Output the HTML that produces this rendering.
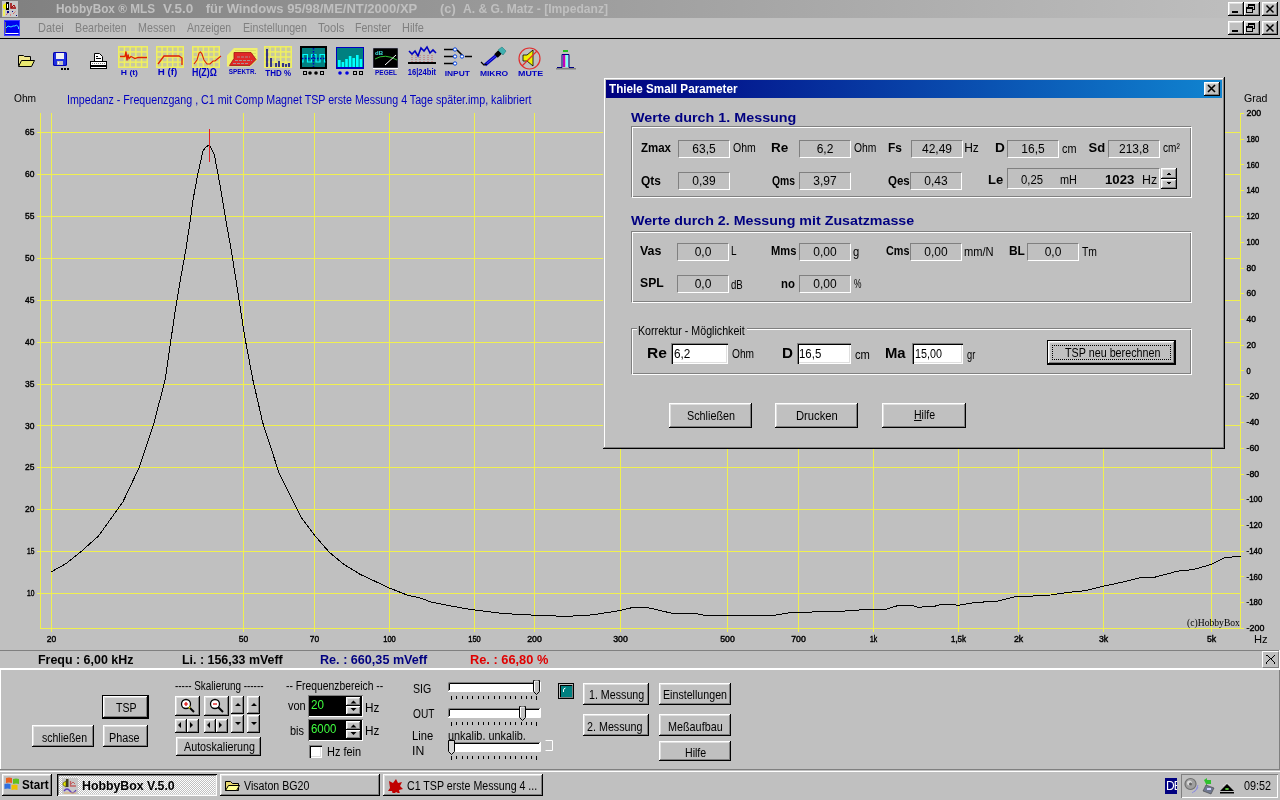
<!DOCTYPE html>
<html><head><meta charset="utf-8">
<style>
*{box-sizing:border-box;margin:0;padding:0}
html{will-change:transform}html,body{width:1280px;height:800px;overflow:hidden;background:#c0c0c0;font-family:"Liberation Sans",sans-serif;font-size:12px;color:#000;position:relative}
.a{position:absolute;white-space:nowrap}
.btn{position:absolute;background:#c0c0c0;box-shadow:inset -1px -1px #000,inset 1px 1px #fff,inset -2px -2px #808080,inset 2px 2px #dfdfdf;text-align:center;white-space:nowrap}
.sunk{position:absolute;background:#c0c0c0;border-top:1px solid #808080;border-left:1px solid #808080;border-right:1px solid #fff;border-bottom:1px solid #fff;text-align:center;white-space:nowrap}
.edit{position:absolute;background:#fff;box-shadow:inset 1px 1px #808080,inset 2px 2px #000,inset -1px -1px #fff,inset -2px -2px #dfdfdf;white-space:nowrap}
.grp{position:absolute;border-top:1px solid #808080;border-left:1px solid #808080;border-right:1px solid #fff;border-bottom:1px solid #fff;box-shadow:inset 1px 1px #fff,inset -1px -1px #808080}
.b{font-weight:bold}
.wb{position:absolute;width:16px;height:14px;background:#c0c0c0;box-shadow:inset -1px -1px #000,inset 1px 1px #fff,inset -2px -2px #808080,inset 2px 2px #dfdfdf}
</style></head><body>

<!-- title bar -->
<div class="a" style="left:0;top:0;width:1280px;height:18px;background:linear-gradient(to right,#808080,#c0c0c0)"></div>
<svg class="a" style="left:2px;top:1px" width="16" height="16">
<rect width="16" height="16" fill="#c8c8c8"/>
<path d="M1,4 l3,-2 v7 l-3,-2z" fill="#f0f000"/><rect x="4" y="1" width="3" height="8" fill="#000"/><rect x="5" y="3" width="1" height="4" fill="#fff"/>
<path d="M9,2 v5 h5" fill="none" stroke="#a00000" stroke-width="1.5"/><path d="M10,6 l2,-2 l1,2" fill="none" stroke="#a00000"/>
<rect x="1" y="9" width="2" height="6" fill="#f0f060"/>
<path d="M4,14 l3,-3 M8,14 l2,0 M11,13 l3,-3" stroke="#e04040" stroke-dasharray="1,1"/>
<rect x="5" y="10" width="2" height="2" fill="#000080"/><rect x="10" y="10" width="1" height="1" fill="#000080"/><rect x="14" y="14" width="1" height="1" fill="#000080"/>
</svg>
<div class="wb" style="left:1228px;top:2px"></div>
<div class="wb" style="left:1244px;top:2px"></div>
<div class="wb" style="left:1262px;top:2px"></div>
<div class="wb" style="left:1228px;top:21px"></div>
<div class="wb" style="left:1244px;top:21px"></div>
<div class="wb" style="left:1262px;top:21px"></div>

<svg class="a" style="left:1228px;top:2px" width="50" height="34">
<g>
<rect x="4" y="9" width="6" height="2" fill="#000"/>
<rect x="20.5" y="2.5" width="6" height="5" fill="none" stroke="#000"/><rect x="20" y="2" width="7" height="2" fill="#000"/>
<rect x="18.5" y="5.5" width="6" height="5" fill="#c0c0c0" stroke="#000"/><rect x="18" y="5" width="7" height="2" fill="#000"/>
<path d="M38.5,3.5 l7,7 M45.5,3.5 l-7,7" stroke="#000" stroke-width="1.5"/>
</g>
<g transform="translate(0,19)">
<rect x="4" y="9" width="6" height="2" fill="#000"/>
<rect x="20.5" y="2.5" width="6" height="5" fill="none" stroke="#000"/><rect x="20" y="2" width="7" height="2" fill="#000"/>
<rect x="18.5" y="5.5" width="6" height="5" fill="#c0c0c0" stroke="#000"/><rect x="18" y="5" width="7" height="2" fill="#000"/>
<path d="M38.5,3.5 l7,7 M45.5,3.5 l-7,7" stroke="#000" stroke-width="1.5"/>
</g>
</svg>
<!-- menu bar -->
<svg class="a" style="left:4px;top:20px" width="16" height="16">
<rect x="0" y="0" width="16" height="16" fill="#0000f0"/><rect x="0.5" y="0.5" width="15" height="15" fill="none" stroke="#4040ff" stroke-width="1"/>
<path d="M1.5,2 V13.5 H14.5" fill="none" stroke="#fff" stroke-width="1"/><path d="M1.5,2 V13" fill="none" stroke="#000" stroke-width="0.6"/>
<path d="M2,8 l2,-2 l3,1 l2,-1 l2,0 l1.5,-1 l2,2 v2" fill="none" stroke="#40e0ff" stroke-width="1"/>
</svg>
<div class="a" style="left:0;top:38px;width:1280px;height:1px;background:#000"></div>

<!-- chart labels -->

<svg class="a" style="left:0;top:0" width="1280" height="800"><line x1="37" y1="593.5" x2="1240" y2="593.5" stroke="#f0f050"/><line x1="37" y1="551.5" x2="1240" y2="551.5" stroke="#f0f050"/><line x1="37" y1="509.5" x2="1240" y2="509.5" stroke="#f0f050"/><line x1="37" y1="467.5" x2="1240" y2="467.5" stroke="#f0f050"/><line x1="37" y1="425.5" x2="1240" y2="425.5" stroke="#f0f050"/><line x1="37" y1="384.5" x2="1240" y2="384.5" stroke="#f0f050"/><line x1="37" y1="342.5" x2="1240" y2="342.5" stroke="#f0f050"/><line x1="37" y1="300.5" x2="1240" y2="300.5" stroke="#f0f050"/><line x1="37" y1="258.5" x2="1240" y2="258.5" stroke="#f0f050"/><line x1="37" y1="216.5" x2="1240" y2="216.5" stroke="#f0f050"/><line x1="37" y1="174.5" x2="1240" y2="174.5" stroke="#f0f050"/><line x1="37" y1="132.5" x2="1240" y2="132.5" stroke="#f0f050"/><line x1="51.5" y1="113" x2="51.5" y2="632" stroke="#f0f050"/><line x1="243.5" y1="113" x2="243.5" y2="632" stroke="#f0f050"/><line x1="314.5" y1="113" x2="314.5" y2="632" stroke="#f0f050"/><line x1="389.5" y1="113" x2="389.5" y2="632" stroke="#f0f050"/><line x1="474.5" y1="113" x2="474.5" y2="632" stroke="#f0f050"/><line x1="534.5" y1="113" x2="534.5" y2="632" stroke="#f0f050"/><line x1="620.5" y1="113" x2="620.5" y2="632" stroke="#f0f050"/><line x1="727.5" y1="113" x2="727.5" y2="632" stroke="#f0f050"/><line x1="798.5" y1="113" x2="798.5" y2="632" stroke="#f0f050"/><line x1="873.5" y1="113" x2="873.5" y2="632" stroke="#f0f050"/><line x1="958.5" y1="113" x2="958.5" y2="632" stroke="#f0f050"/><line x1="1018.5" y1="113" x2="1018.5" y2="632" stroke="#f0f050"/><line x1="1103.5" y1="113" x2="1103.5" y2="632" stroke="#f0f050"/><line x1="1211.5" y1="113" x2="1211.5" y2="632" stroke="#f0f050"/><line x1="40.5" y1="113" x2="40.5" y2="629" stroke="#f0f050"/><line x1="40" y1="628.5" x2="1244" y2="628.5" stroke="#f0f050"/><line x1="1240.5" y1="113" x2="1240.5" y2="629" stroke="#f0f050"/><line x1="1240" y1="113.5" x2="1244" y2="113.5" stroke="#f0f050"/><line x1="1240" y1="139.5" x2="1244" y2="139.5" stroke="#f0f050"/><line x1="1240" y1="164.5" x2="1244" y2="164.5" stroke="#f0f050"/><line x1="1240" y1="190.5" x2="1244" y2="190.5" stroke="#f0f050"/><line x1="1240" y1="216.5" x2="1244" y2="216.5" stroke="#f0f050"/><line x1="1240" y1="242.5" x2="1244" y2="242.5" stroke="#f0f050"/><line x1="1240" y1="268.5" x2="1244" y2="268.5" stroke="#f0f050"/><line x1="1240" y1="293.5" x2="1244" y2="293.5" stroke="#f0f050"/><line x1="1240" y1="319.5" x2="1244" y2="319.5" stroke="#f0f050"/><line x1="1240" y1="345.5" x2="1244" y2="345.5" stroke="#f0f050"/><line x1="1240" y1="370.5" x2="1244" y2="370.5" stroke="#f0f050"/><line x1="1240" y1="396.5" x2="1244" y2="396.5" stroke="#f0f050"/><line x1="1240" y1="422.5" x2="1244" y2="422.5" stroke="#f0f050"/><line x1="1240" y1="448.5" x2="1244" y2="448.5" stroke="#f0f050"/><line x1="1240" y1="474.5" x2="1244" y2="474.5" stroke="#f0f050"/><line x1="1240" y1="499.5" x2="1244" y2="499.5" stroke="#f0f050"/><line x1="1240" y1="525.5" x2="1244" y2="525.5" stroke="#f0f050"/><line x1="1240" y1="551.5" x2="1244" y2="551.5" stroke="#f0f050"/><line x1="1240" y1="576.5" x2="1244" y2="576.5" stroke="#f0f050"/><line x1="1240" y1="602.5" x2="1244" y2="602.5" stroke="#f0f050"/><line x1="1240" y1="628.5" x2="1244" y2="628.5" stroke="#f0f050"/><path d="M51,572 L66,563.6 L82.2,550.6 L98.5,536 L122.9,501.9 L139.1,467.7 L153.7,423.9 L165.1,380 L169.4,350 L175,312.5 L180.6,278.7 L186,248.7 L190,222.5 L193,200 L197.5,175.6 L203,151 L206,147 L209.5,144.5 L214.4,155 L220,185 L225.6,218.7 L231,248.7 L236.9,286 L244.4,335 L252.9,380 L262.6,422.2 L278.9,472.6 L301.6,518.1 L314.6,535.3 L329.2,552.2 L343.9,564.3 L360.1,574.3 L389.4,588 L407.2,595.1 L420,598 L431.2,602 L447.5,605.4 L471.6,609.6 L502.5,613.5 L534.3,615.2 L566.1,616.4 L591.9,614.9 L620,610.6 L633.8,607.2 L645.8,607.2 L671.6,613.2 L695.6,613.5 L704.2,615.2 L774.7,615.2 L791.9,612.3 L840.6,611.6 L849.2,610.4 L864.7,609.8 L887,609 L899,605.2 L912.8,605.5 L918,607.3 L935.2,606.1 L942,604.2 L954,604.3 L957.5,605.5 L964.4,604.3 L978.1,602.1 L995.3,601.8 L1014.2,597 L1030,596.2 L1050.6,595 L1067.8,592.4 L1085,590.7 L1102.2,586.4 L1122.8,582.1 L1143.4,577 L1155.5,577 L1169.2,573.5 L1176.1,571.3 L1193.3,569.6 L1210.5,564.6 L1224.2,558 L1240.6,556" fill="none" stroke="#000" stroke-width="1" shape-rendering="crispEdges"/><line x1="209.5" y1="129" x2="209.5" y2="162" stroke="#e02020"/><text x="27.1" y="596.1" font-size="8.6" font-family="Liberation Sans" stroke="#000" stroke-width="0.4" textLength="7.4" lengthAdjust="spacingAndGlyphs">10</text><text x="27.1" y="554.2" font-size="8.6" font-family="Liberation Sans" stroke="#000" stroke-width="0.4" textLength="7.4" lengthAdjust="spacingAndGlyphs">15</text><text x="25.1" y="512.3" font-size="8.6" font-family="Liberation Sans" stroke="#000" stroke-width="0.4" textLength="9.4" lengthAdjust="spacingAndGlyphs">20</text><text x="25.1" y="470.4" font-size="8.6" font-family="Liberation Sans" stroke="#000" stroke-width="0.4" textLength="9.4" lengthAdjust="spacingAndGlyphs">25</text><text x="25.1" y="428.5" font-size="8.6" font-family="Liberation Sans" stroke="#000" stroke-width="0.4" textLength="9.4" lengthAdjust="spacingAndGlyphs">30</text><text x="25.1" y="386.6" font-size="8.6" font-family="Liberation Sans" stroke="#000" stroke-width="0.4" textLength="9.4" lengthAdjust="spacingAndGlyphs">35</text><text x="25.1" y="344.7" font-size="8.6" font-family="Liberation Sans" stroke="#000" stroke-width="0.4" textLength="9.4" lengthAdjust="spacingAndGlyphs">40</text><text x="25.1" y="302.8" font-size="8.6" font-family="Liberation Sans" stroke="#000" stroke-width="0.4" textLength="9.4" lengthAdjust="spacingAndGlyphs">45</text><text x="25.1" y="260.9" font-size="8.6" font-family="Liberation Sans" stroke="#000" stroke-width="0.4" textLength="9.4" lengthAdjust="spacingAndGlyphs">50</text><text x="25.1" y="219.0" font-size="8.6" font-family="Liberation Sans" stroke="#000" stroke-width="0.4" textLength="9.4" lengthAdjust="spacingAndGlyphs">55</text><text x="25.1" y="177.1" font-size="8.6" font-family="Liberation Sans" stroke="#000" stroke-width="0.4" textLength="9.4" lengthAdjust="spacingAndGlyphs">60</text><text x="25.1" y="135.2" font-size="8.6" font-family="Liberation Sans" stroke="#000" stroke-width="0.4" textLength="9.4" lengthAdjust="spacingAndGlyphs">65</text><text x="1246.6" y="116.1" font-size="8.6" font-family="Liberation Sans" stroke="#000" stroke-width="0.4" textLength="14.6" lengthAdjust="spacingAndGlyphs">200</text><text x="1246.6" y="141.8" font-size="8.6" font-family="Liberation Sans" stroke="#000" stroke-width="0.4" textLength="12.6" lengthAdjust="spacingAndGlyphs">180</text><text x="1246.6" y="167.6" font-size="8.6" font-family="Liberation Sans" stroke="#000" stroke-width="0.4" textLength="12.6" lengthAdjust="spacingAndGlyphs">160</text><text x="1246.6" y="193.3" font-size="8.6" font-family="Liberation Sans" stroke="#000" stroke-width="0.4" textLength="12.6" lengthAdjust="spacingAndGlyphs">140</text><text x="1246.6" y="219.1" font-size="8.6" font-family="Liberation Sans" stroke="#000" stroke-width="0.4" textLength="12.6" lengthAdjust="spacingAndGlyphs">120</text><text x="1246.6" y="244.8" font-size="8.6" font-family="Liberation Sans" stroke="#000" stroke-width="0.4" textLength="12.6" lengthAdjust="spacingAndGlyphs">100</text><text x="1246.6" y="270.6" font-size="8.6" font-family="Liberation Sans" stroke="#000" stroke-width="0.4" textLength="9.4" lengthAdjust="spacingAndGlyphs">80</text><text x="1246.6" y="296.4" font-size="8.6" font-family="Liberation Sans" stroke="#000" stroke-width="0.4" textLength="9.4" lengthAdjust="spacingAndGlyphs">60</text><text x="1246.6" y="322.1" font-size="8.6" font-family="Liberation Sans" stroke="#000" stroke-width="0.4" textLength="9.4" lengthAdjust="spacingAndGlyphs">40</text><text x="1246.6" y="347.9" font-size="8.6" font-family="Liberation Sans" stroke="#000" stroke-width="0.4" textLength="9.4" lengthAdjust="spacingAndGlyphs">20</text><text x="1246.6" y="373.6" font-size="8.6" font-family="Liberation Sans" stroke="#000" stroke-width="0.4" textLength="4.2" lengthAdjust="spacingAndGlyphs">0</text><text x="1246.6" y="399.4" font-size="8.6" font-family="Liberation Sans" stroke="#000" stroke-width="0.4" textLength="12.6" lengthAdjust="spacingAndGlyphs">-20</text><text x="1246.6" y="425.1" font-size="8.6" font-family="Liberation Sans" stroke="#000" stroke-width="0.4" textLength="12.6" lengthAdjust="spacingAndGlyphs">-40</text><text x="1246.6" y="450.9" font-size="8.6" font-family="Liberation Sans" stroke="#000" stroke-width="0.4" textLength="12.6" lengthAdjust="spacingAndGlyphs">-60</text><text x="1246.6" y="476.6" font-size="8.6" font-family="Liberation Sans" stroke="#000" stroke-width="0.4" textLength="12.6" lengthAdjust="spacingAndGlyphs">-80</text><text x="1246.6" y="502.4" font-size="8.6" font-family="Liberation Sans" stroke="#000" stroke-width="0.4" textLength="15.8" lengthAdjust="spacingAndGlyphs">-100</text><text x="1246.6" y="528.1" font-size="8.6" font-family="Liberation Sans" stroke="#000" stroke-width="0.4" textLength="15.8" lengthAdjust="spacingAndGlyphs">-120</text><text x="1246.6" y="553.9" font-size="8.6" font-family="Liberation Sans" stroke="#000" stroke-width="0.4" textLength="15.8" lengthAdjust="spacingAndGlyphs">-140</text><text x="1246.6" y="579.6" font-size="8.6" font-family="Liberation Sans" stroke="#000" stroke-width="0.4" textLength="15.8" lengthAdjust="spacingAndGlyphs">-160</text><text x="1246.6" y="605.4" font-size="8.6" font-family="Liberation Sans" stroke="#000" stroke-width="0.4" textLength="15.8" lengthAdjust="spacingAndGlyphs">-180</text><text x="1246.6" y="631.1" font-size="8.6" font-family="Liberation Sans" stroke="#000" stroke-width="0.4" textLength="17.8" lengthAdjust="spacingAndGlyphs">-200</text><text x="46.8" y="641.5" font-size="8.6" font-family="Liberation Sans" stroke="#000" stroke-width="0.4" textLength="9.4" lengthAdjust="spacingAndGlyphs">20</text><text x="238.8" y="641.5" font-size="8.6" font-family="Liberation Sans" stroke="#000" stroke-width="0.4" textLength="9.4" lengthAdjust="spacingAndGlyphs">50</text><text x="309.8" y="641.5" font-size="8.6" font-family="Liberation Sans" stroke="#000" stroke-width="0.4" textLength="9.4" lengthAdjust="spacingAndGlyphs">70</text><text x="383.2" y="641.5" font-size="8.6" font-family="Liberation Sans" stroke="#000" stroke-width="0.4" textLength="12.6" lengthAdjust="spacingAndGlyphs">100</text><text x="468.2" y="641.5" font-size="8.6" font-family="Liberation Sans" stroke="#000" stroke-width="0.4" textLength="12.6" lengthAdjust="spacingAndGlyphs">150</text><text x="527.2" y="641.5" font-size="8.6" font-family="Liberation Sans" stroke="#000" stroke-width="0.4" textLength="14.6" lengthAdjust="spacingAndGlyphs">200</text><text x="613.2" y="641.5" font-size="8.6" font-family="Liberation Sans" stroke="#000" stroke-width="0.4" textLength="14.6" lengthAdjust="spacingAndGlyphs">300</text><text x="720.2" y="641.5" font-size="8.6" font-family="Liberation Sans" stroke="#000" stroke-width="0.4" textLength="14.6" lengthAdjust="spacingAndGlyphs">500</text><text x="791.2" y="641.5" font-size="8.6" font-family="Liberation Sans" stroke="#000" stroke-width="0.4" textLength="14.6" lengthAdjust="spacingAndGlyphs">700</text><text x="869.9" y="641.5" font-size="8.6" font-family="Liberation Sans" stroke="#000" stroke-width="0.4" textLength="7.2" lengthAdjust="spacingAndGlyphs">1k</text><text x="951.0" y="641.5" font-size="8.6" font-family="Liberation Sans" stroke="#000" stroke-width="0.4" textLength="15.0" lengthAdjust="spacingAndGlyphs">1,5k</text><text x="1013.9" y="641.5" font-size="8.6" font-family="Liberation Sans" stroke="#000" stroke-width="0.4" textLength="9.2" lengthAdjust="spacingAndGlyphs">2k</text><text x="1098.9" y="641.5" font-size="8.6" font-family="Liberation Sans" stroke="#000" stroke-width="0.4" textLength="9.2" lengthAdjust="spacingAndGlyphs">3k</text><text x="1206.9" y="641.5" font-size="8.6" font-family="Liberation Sans" stroke="#000" stroke-width="0.4" textLength="9.2" lengthAdjust="spacingAndGlyphs">5k</text></svg>
<svg class="a" style="left:0;top:40px" width="600" height="40" viewBox="0 40 600 40"><defs><pattern id="yg" x="0" y="0" width="5" height="5" patternUnits="userSpaceOnUse"><rect width="5" height="5" fill="#f4f44c"/><rect x="1.5" y="1.5" width="3.5" height="3.5" fill="#c8c8a0"/></pattern></defs><path d="M18.5,55.5 h5 l1,1 h6 v9 h-12 z" fill="#f0e68c" stroke="#000"/><path d="M18.5,66.5 l3,-6 h13 l-3,6 z" fill="#e8e870" stroke="#000"/><rect x="53" y="52" width="14" height="14" fill="#0000b0" rx="1.5"/><rect x="54" y="53" width="12" height="12" fill="#2030e0" rx="1"/><rect x="56" y="53" width="8" height="6" fill="#f0f0f0"/><rect x="57" y="61" width="6" height="4" fill="#c0c0c0"/><rect x="58" y="62" width="1" height="2" fill="#fff"/><rect x="61" y="68" width="2" height="2" fill="#000"/><rect x="64" y="68" width="2" height="2" fill="#000"/><rect x="67" y="68" width="2" height="2" fill="#000"/><path d="M94.5,53.5 h5 l3,3 v5 h-8 z" fill="#fff" stroke="#000"/><path d="M96,56.5 h2 M96,58.5 h5" stroke="#000"/><rect x="90.5" y="61.5" width="16" height="4" fill="#fff" stroke="#000"/><line x1="92" y1="63.5" x2="105" y2="63.5" stroke="#808080" stroke-dasharray="1,1"/><rect x="90.5" y="66.5" width="16" height="2" fill="#fff" stroke="#000"/><rect x="118" y="46" width="30" height="22" fill="#f0f060"/><rect x="119.50" y="47.50" width="4.20" height="3.62" fill="#c8c8a0"/><rect x="119.50" y="52.62" width="4.20" height="3.62" fill="#c8c8a0"/><rect x="119.50" y="57.75" width="4.20" height="3.62" fill="#c8c8a0"/><rect x="119.50" y="62.88" width="4.20" height="3.62" fill="#c8c8a0"/><rect x="125.20" y="47.50" width="4.20" height="3.62" fill="#c8c8a0"/><rect x="125.20" y="52.62" width="4.20" height="3.62" fill="#c8c8a0"/><rect x="125.20" y="57.75" width="4.20" height="3.62" fill="#c8c8a0"/><rect x="125.20" y="62.88" width="4.20" height="3.62" fill="#c8c8a0"/><rect x="130.90" y="47.50" width="4.20" height="3.62" fill="#c8c8a0"/><rect x="130.90" y="52.62" width="4.20" height="3.62" fill="#c8c8a0"/><rect x="130.90" y="57.75" width="4.20" height="3.62" fill="#c8c8a0"/><rect x="130.90" y="62.88" width="4.20" height="3.62" fill="#c8c8a0"/><rect x="136.60" y="47.50" width="4.20" height="3.62" fill="#c8c8a0"/><rect x="136.60" y="52.62" width="4.20" height="3.62" fill="#c8c8a0"/><rect x="136.60" y="57.75" width="4.20" height="3.62" fill="#c8c8a0"/><rect x="136.60" y="62.88" width="4.20" height="3.62" fill="#c8c8a0"/><rect x="142.30" y="47.50" width="4.20" height="3.62" fill="#c8c8a0"/><rect x="142.30" y="52.62" width="4.20" height="3.62" fill="#c8c8a0"/><rect x="142.30" y="57.75" width="4.20" height="3.62" fill="#c8c8a0"/><rect x="142.30" y="62.88" width="4.20" height="3.62" fill="#c8c8a0"/><rect x="156" y="46" width="28" height="22" fill="#f0f060"/><rect x="157.50" y="47.50" width="3.80" height="3.62" fill="#c8c8a0"/><rect x="157.50" y="52.62" width="3.80" height="3.62" fill="#c8c8a0"/><rect x="157.50" y="57.75" width="3.80" height="3.62" fill="#c8c8a0"/><rect x="157.50" y="62.88" width="3.80" height="3.62" fill="#c8c8a0"/><rect x="162.80" y="47.50" width="3.80" height="3.62" fill="#c8c8a0"/><rect x="162.80" y="52.62" width="3.80" height="3.62" fill="#c8c8a0"/><rect x="162.80" y="57.75" width="3.80" height="3.62" fill="#c8c8a0"/><rect x="162.80" y="62.88" width="3.80" height="3.62" fill="#c8c8a0"/><rect x="168.10" y="47.50" width="3.80" height="3.62" fill="#c8c8a0"/><rect x="168.10" y="52.62" width="3.80" height="3.62" fill="#c8c8a0"/><rect x="168.10" y="57.75" width="3.80" height="3.62" fill="#c8c8a0"/><rect x="168.10" y="62.88" width="3.80" height="3.62" fill="#c8c8a0"/><rect x="173.40" y="47.50" width="3.80" height="3.62" fill="#c8c8a0"/><rect x="173.40" y="52.62" width="3.80" height="3.62" fill="#c8c8a0"/><rect x="173.40" y="57.75" width="3.80" height="3.62" fill="#c8c8a0"/><rect x="173.40" y="62.88" width="3.80" height="3.62" fill="#c8c8a0"/><rect x="178.70" y="47.50" width="3.80" height="3.62" fill="#c8c8a0"/><rect x="178.70" y="52.62" width="3.80" height="3.62" fill="#c8c8a0"/><rect x="178.70" y="57.75" width="3.80" height="3.62" fill="#c8c8a0"/><rect x="178.70" y="62.88" width="3.80" height="3.62" fill="#c8c8a0"/><rect x="192" y="46" width="28" height="22" fill="#f0f060"/><rect x="193.50" y="47.50" width="3.80" height="3.62" fill="#c8c8a0"/><rect x="193.50" y="52.62" width="3.80" height="3.62" fill="#c8c8a0"/><rect x="193.50" y="57.75" width="3.80" height="3.62" fill="#c8c8a0"/><rect x="193.50" y="62.88" width="3.80" height="3.62" fill="#c8c8a0"/><rect x="198.80" y="47.50" width="3.80" height="3.62" fill="#c8c8a0"/><rect x="198.80" y="52.62" width="3.80" height="3.62" fill="#c8c8a0"/><rect x="198.80" y="57.75" width="3.80" height="3.62" fill="#c8c8a0"/><rect x="198.80" y="62.88" width="3.80" height="3.62" fill="#c8c8a0"/><rect x="204.10" y="47.50" width="3.80" height="3.62" fill="#c8c8a0"/><rect x="204.10" y="52.62" width="3.80" height="3.62" fill="#c8c8a0"/><rect x="204.10" y="57.75" width="3.80" height="3.62" fill="#c8c8a0"/><rect x="204.10" y="62.88" width="3.80" height="3.62" fill="#c8c8a0"/><rect x="209.40" y="47.50" width="3.80" height="3.62" fill="#c8c8a0"/><rect x="209.40" y="52.62" width="3.80" height="3.62" fill="#c8c8a0"/><rect x="209.40" y="57.75" width="3.80" height="3.62" fill="#c8c8a0"/><rect x="209.40" y="62.88" width="3.80" height="3.62" fill="#c8c8a0"/><rect x="214.70" y="47.50" width="3.80" height="3.62" fill="#c8c8a0"/><rect x="214.70" y="52.62" width="3.80" height="3.62" fill="#c8c8a0"/><rect x="214.70" y="57.75" width="3.80" height="3.62" fill="#c8c8a0"/><rect x="214.70" y="62.88" width="3.80" height="3.62" fill="#c8c8a0"/><rect x="264" y="46" width="28" height="22" fill="#f0f060"/><rect x="265.50" y="47.50" width="3.80" height="3.62" fill="#c8c8a0"/><rect x="265.50" y="52.62" width="3.80" height="3.62" fill="#c8c8a0"/><rect x="265.50" y="57.75" width="3.80" height="3.62" fill="#c8c8a0"/><rect x="265.50" y="62.88" width="3.80" height="3.62" fill="#c8c8a0"/><rect x="270.80" y="47.50" width="3.80" height="3.62" fill="#c8c8a0"/><rect x="270.80" y="52.62" width="3.80" height="3.62" fill="#c8c8a0"/><rect x="270.80" y="57.75" width="3.80" height="3.62" fill="#c8c8a0"/><rect x="270.80" y="62.88" width="3.80" height="3.62" fill="#c8c8a0"/><rect x="276.10" y="47.50" width="3.80" height="3.62" fill="#c8c8a0"/><rect x="276.10" y="52.62" width="3.80" height="3.62" fill="#c8c8a0"/><rect x="276.10" y="57.75" width="3.80" height="3.62" fill="#c8c8a0"/><rect x="276.10" y="62.88" width="3.80" height="3.62" fill="#c8c8a0"/><rect x="281.40" y="47.50" width="3.80" height="3.62" fill="#c8c8a0"/><rect x="281.40" y="52.62" width="3.80" height="3.62" fill="#c8c8a0"/><rect x="281.40" y="57.75" width="3.80" height="3.62" fill="#c8c8a0"/><rect x="281.40" y="62.88" width="3.80" height="3.62" fill="#c8c8a0"/><rect x="286.70" y="47.50" width="3.80" height="3.62" fill="#c8c8a0"/><rect x="286.70" y="52.62" width="3.80" height="3.62" fill="#c8c8a0"/><rect x="286.70" y="57.75" width="3.80" height="3.62" fill="#c8c8a0"/><rect x="286.70" y="62.88" width="3.80" height="3.62" fill="#c8c8a0"/><path d="M120,56.5 h5 l1,-5 l1,9 l1,-6 l1,4 l2,-2 l2,1 l2,1 l3,-1 h9" fill="none" stroke="#e02000" stroke-width="1.3"/><path d="M158,64 l3,-4 l3,-4 h15 l3,2 v7" fill="none" stroke="#e02000" stroke-width="1.3"/><path d="M194,64 l3,-4 l2,-7 l1.5,-1 l1.5,2 l2,6 l3,4 l3,0 l3,-3 l2,0 l6,-5" fill="none" stroke="#e02000" stroke-width="1.1"/><path d="M227,55.5 l7,-7.5 h23.5 v11.5 l-7,7 h-23.5z" fill="#f0f070"/><path d="M235,50.5 h21 M236,53.5 h20 M237,56.5 h19" stroke="#d8d860" stroke-width="0.8"/><path d="M229.5,65.5 l4.5,-7 v-6 h17 l5,7 l-6,6z" fill="#e02828" stroke="#a01010" stroke-width="0.8"/><path d="M237,57 h13 M235,60.5 h17 M233,63.5 h16" stroke="#a89090" stroke-width="1.2" stroke-dasharray="3,1"/><path d="M267,67 v-18 M271,67 v-9 M276,67 v-4 M279,67 v-6 M283,67 v-4 M286,67 v-3 M289,67 v-4" stroke="#000080" stroke-width="1.5"/><rect x="300" y="46" width="27" height="23" fill="#000"/><rect x="302" y="48" width="23" height="19" fill="#008080"/><path d="M302,62 h1 v-7.5 h4.5 v7.5 h4 v-7.5 h4.5 v7.5 h4 v-7.5 h4.5 v7.5 h1" fill="none" stroke="#00ffff" stroke-width="1.2"/><path d="M313.5,48 v19 M302,58.5 h23" stroke="#0000c0" stroke-width="1.5" stroke-dasharray="1.5,1.5"/><rect x="303.5" y="71.5" width="3" height="3" fill="none" stroke="#000"/><circle cx="310" cy="73" r="1.8"/><circle cx="316" cy="73" r="1.8"/><rect x="320.5" y="71.5" width="3" height="3" fill="none" stroke="#000"/><rect x="336" y="47" width="28" height="22" fill="#0000c0"/><rect x="337" y="48" width="26" height="19" fill="#008080"/><path d="M338,66 v-4 h3 v4 M340,66 z" fill="none"/><rect x="338.0" y="60" width="2.6" height="7" fill="#00ffff"/><rect x="341.6" y="62" width="2.6" height="5" fill="#00ffff"/><rect x="345.2" y="59" width="2.6" height="8" fill="#00ffff"/><rect x="348.8" y="56" width="2.6" height="11" fill="#00ffff"/><rect x="352.4" y="58" width="2.6" height="9" fill="#00ffff"/><rect x="356.0" y="55" width="2.6" height="12" fill="#00ffff"/><rect x="359.6" y="59" width="2.6" height="8" fill="#00ffff"/><circle cx="340" cy="73" r="1.8" fill="#0000e0"/><circle cx="347" cy="73" r="1.8" fill="#0000e0"/><rect x="353.5" y="71.5" width="3" height="3" fill="none" stroke="#000"/><rect x="359.5" y="71.5" width="3" height="3" fill="none" stroke="#000"/><rect x="373" y="48" width="25" height="20" fill="#000" stroke="#b0b0d0" stroke-width="0.5"/><path d="M375,59 q10,-6 22,1" fill="none" stroke="#30c030"/><line x1="385" y1="65" x2="396" y2="55" stroke="#fff"/><text x="375" y="55" font-size="6" fill="#40e0e0" font-family="Liberation Sans" font-weight="bold">dB</text><rect x="373" y="68" width="25" height="1" fill="#fff"/><path d="M409,51 l3,3 l3,-3 l3,5 l3,-8 l3,3 l3,-4 l3,6 l3,-3 l3,3" fill="none" stroke="#0000c0" stroke-width="1.6"/><path d="M412,55 v8 M416,55 v8 M420,55 v8 M424,55 v8 M428,55 v8 M432,55 v8" stroke="#c06060" stroke-dasharray="1,1"/><rect x="408" y="62" width="28" height="2" fill="#000"/><path d="M444,49.5 h10 M444,56.5 h10 M444,63.5 h10 M457,50 l6,6 M465,56.5 h7" stroke="#000" stroke-width="1.6"/><circle cx="455" cy="49.5" r="1.7" fill="#fff" stroke="#0040e0"/><circle cx="455" cy="56.5" r="1.7" fill="#fff" stroke="#0040e0"/><circle cx="455" cy="63.5" r="1.7" fill="#fff" stroke="#0040e0"/><circle cx="462" cy="56.5" r="1.7" fill="#fff" stroke="#0040e0"/><path d="M485,65 l13,-11" stroke="#0000c0" stroke-width="3.2"/><path d="M485.5,64.5 l12.5,-10.5" stroke="#6060ff" stroke-width="0.8"/><path d="M496,56 l4,-4" stroke="#000" stroke-width="5"/><path d="M498,50 l4,-3 l4,4 l-3,4z" fill="#40b0b0" stroke="#208080" stroke-width="0.6"/><path d="M481,62 l3,3 l3,-1" fill="none" stroke="#000" stroke-width="1.2"/><circle cx="529.5" cy="58.5" r="10.5" fill="none" stroke="#e03030" stroke-width="1.2"/><path d="M523,55 h4 l6,-5 v16 l-6,-5 h-4 z" fill="#f0f000" stroke="#000" stroke-width="0.8"/><line x1="522" y1="66" x2="537" y2="51" stroke="#e03030" stroke-width="1.2"/><rect x="563" y="50" width="5" height="2" fill="#20c020"/><path d="M557,67.5 h5 v-13 h7 v13 h5" fill="none" stroke="#000080" stroke-width="1"/><rect x="563" y="55" width="2" height="12" fill="#c000c0"/><rect x="566" y="55" width="2" height="12" fill="#80ffff"/><rect x="556" y="68" width="20" height="1.5" fill="#808080"/><text x="120.8" y="74.8" font-size="8.0" font-weight="bold" fill="#0000c0" font-family="Liberation Sans" textLength="17.200000000000003" lengthAdjust="spacingAndGlyphs">H (t)</text><text x="157.8" y="75" font-size="9.3" font-weight="bold" fill="#0000c0" font-family="Liberation Sans" textLength="19.5" lengthAdjust="spacingAndGlyphs">H (f)</text><text x="192" y="76" font-size="10.0" font-weight="bold" fill="#0000c0" font-family="Liberation Sans" textLength="24.80000000000001" lengthAdjust="spacingAndGlyphs">H(Z)Ω</text><text x="228.75" y="74" font-size="6.9" font-weight="bold" fill="#0000c0" font-family="Liberation Sans" textLength="27.649999999999977" lengthAdjust="spacingAndGlyphs">SPEKTR.</text><text x="265.3" y="76" font-size="9.1" font-weight="bold" fill="#0000c0" font-family="Liberation Sans" textLength="25.69999999999999" lengthAdjust="spacingAndGlyphs">THD %</text><text x="375" y="75" font-size="7.1" font-weight="bold" fill="#0000c0" font-family="Liberation Sans" textLength="22" lengthAdjust="spacingAndGlyphs">PEGEL</text><text x="407.8" y="74.6" font-size="9.4" font-weight="bold" fill="#0000c0" font-family="Liberation Sans" textLength="28.30000000000001" lengthAdjust="spacingAndGlyphs">16|24bit</text><text x="444.7" y="76" font-size="7.6" font-weight="bold" fill="#0000c0" font-family="Liberation Sans" textLength="25.19999999999999" lengthAdjust="spacingAndGlyphs">INPUT</text><text x="479.9" y="76" font-size="7.6" font-weight="bold" fill="#0000c0" font-family="Liberation Sans" textLength="28.30000000000001" lengthAdjust="spacingAndGlyphs">MIKRO</text><text x="518" y="76" font-size="7.6" font-weight="bold" fill="#0000c0" font-family="Liberation Sans" textLength="25.200000000000045" lengthAdjust="spacingAndGlyphs">MUTE</text></svg>

<!-- status bar -->
<div class="a" style="left:0;top:650px;width:1280px;height:1px;background:#808080"></div>
<div class="a" style="left:0;top:668px;width:1280px;height:2px;background:#fff"></div>
<div class="a" style="left:1262px;top:651px;width:17px;height:17px;border-top:1px solid #fff;border-left:1px solid #fff;border-right:1px solid #808080;border-bottom:1px solid #808080"></div>
<svg class="a" style="left:1262px;top:651px" width="17" height="17"><path d="M5,4h1v1h-1zM6,5h1v1h-1zM7,6h1v1h-1zM8,7h1v1h-1zM9,8h1v1h-1zM10,9h1v1h-1zM11,10h1v1h-1zM12,11h1v1h-1zM12,4h1v1h-1zM11,5h1v1h-1zM10,6h1v1h-1zM9,7h1v1h-1zM7,8h1v1h-1zM6,9h1v1h-1zM5,10h1v1h-1zM4,11h1v1h-1zM4,4h1v1h-1zM4,12h1v1h-1zM12,12h1v1h-1z" fill="#000"/></svg>
<div class="a" style="left:1279px;top:650px;width:1px;height:19px;background:#fff"></div>
<div class="a" style="left:1279px;top:670px;width:1px;height:100px;background:#808080"></div>

<!-- bottom panel -->
<div class="a" style="left:0;top:670px;width:1px;height:99px;background:#fff"></div>
<div class="a" style="left:0;top:769px;width:1280px;height:1px;background:#808080"></div>

<!-- taskbar -->
<div class="a" style="left:0;top:771px;width:1280px;height:1px;background:#fff"></div>
<div class="btn" style="left:2px;top:774px;width:50px;height:22px"></div>
<svg class="a" style="left:4px;top:776px" width="16" height="16">
<path d="M2,2 q3,-1 6,0 v5 q-3,-1 -6,0z" fill="#e86020"/>
<path d="M9,3 q3,-1 6,0 v5 q-3,-1 -6,0z" fill="#60c020"/>
<path d="M0.5,8 q3,-1 6,0 v5 q-3,-1 -6,0z" fill="#3070e0"/>
<path d="M7.5,9 q3,-1 6,0 v5 q-3,-1 -6,0z" fill="#f0c000"/>
</svg>


<!-- bottom panel controls -->
<div class="a" style="left:102px;top:695px;width:47px;height:24px;border:1px solid #000"></div>
<div class="btn" style="left:103px;top:696px;width:45px;height:22px;line-height:21px"></div>
<div class="btn" style="left:32px;top:725px;width:62px;height:22px;line-height:21px"></div>
<div class="btn" style="left:103px;top:725px;width:45px;height:22px;line-height:21px"></div>

<div class="btn" style="left:175px;top:696px;width:25px;height:20px"></div>
<div class="btn" style="left:204px;top:696px;width:25px;height:20px"></div>
<svg class="a" style="left:175px;top:696px" width="60" height="20">
<circle cx="11" cy="8" r="4.5" fill="#fff" stroke="#000" stroke-width="1.3"/><path d="M9,8h4M11,6v4" stroke="#e00000" stroke-width="1.2"/><path d="M14,11 l5,5" stroke="#000" stroke-width="2"/><path d="M14,11 l1,1" stroke="#e0e000" stroke-width="2"/>
<circle cx="40" cy="8" r="4.5" fill="#fff" stroke="#000" stroke-width="1.3"/><path d="M38,8h4" stroke="#e00000" stroke-width="1.2"/><path d="M43,11 l5,5" stroke="#000" stroke-width="2"/>
</svg>
<div class="btn" style="left:231px;top:696px;width:13px;height:18px"></div>
<div class="btn" style="left:247px;top:696px;width:13px;height:18px"></div>
<div class="btn" style="left:231px;top:715px;width:13px;height:18px"></div>
<div class="btn" style="left:247px;top:715px;width:13px;height:18px"></div>
<div class="btn" style="left:175px;top:719px;width:12px;height:14px"></div>
<div class="btn" style="left:187px;top:719px;width:12px;height:14px"></div>
<div class="btn" style="left:204px;top:719px;width:12px;height:14px"></div>
<div class="btn" style="left:216px;top:719px;width:12px;height:14px"></div>
<svg class="a" style="left:170px;top:690px" width="100" height="50">
<path d="M65,16 l3,-3 l3,3z M81,16 l3,-3 l3,3z M65,32 l3,3 l3,-3z M81,32 l3,3 l3,-3z" fill="#000"/>
<path d="M11,38 l-3,-3 l3,-3z M20,38 l3,-3 l-3,-3z M40,38 l-3,-3 l3,-3z M49,38 l3,-3 l-3,-3z" fill="#000"/>
</svg>
<div class="btn" style="left:176px;top:737px;width:85px;height:19px;line-height:18px"></div>

<div class="a" style="left:308px;top:695px;width:55px;height:22px;background:#000;box-shadow:inset 1px 1px #808080,inset -1px -1px #fff"></div>
<div class="btn" style="left:346px;top:697px;width:15px;height:9px"></div>
<div class="btn" style="left:346px;top:706px;width:15px;height:9px"></div>
<div class="a" style="left:308px;top:719px;width:55px;height:22px;background:#000;box-shadow:inset 1px 1px #808080,inset -1px -1px #fff"></div>
<div class="btn" style="left:346px;top:721px;width:15px;height:9px"></div>
<div class="btn" style="left:346px;top:730px;width:15px;height:9px"></div>
<svg class="a" style="left:346px;top:697px" width="15" height="44">
<path d="M4.5,6.5 l3,-3 l3,3z M4.5,11 l3,3 l3,-3z M4.5,30.5 l3,-3 l3,3z M4.5,35 l3,3 l3,-3z" fill="#000"/>
</svg>
<div class="a" style="left:309px;top:745px;width:13px;height:13px;background:#fff;box-shadow:inset 1px 1px #808080,inset 2px 2px #000,inset -1px -1px #fff,inset -2px -2px #dfdfdf"></div>

<svg class="a" style="left:440px;top:676px" width="120" height="90">
<g>
<rect x="8" y="6" width="92" height="9" fill="#fff"/>
<path d="M8.5,15 V6.5 H100" stroke="#808080" fill="none"/><path d="M9.5,14 V7.5 H99" stroke="#000" fill="none"/>
<path d="M8,15.5 H100.5 V6" stroke="#fff" fill="none"/>
</g>
<g transform="translate(0,26)">
<rect x="8" y="6" width="92" height="9" fill="#fff"/>
<path d="M8.5,15 V6.5 H100" stroke="#808080" fill="none"/><path d="M9.5,14 V7.5 H99" stroke="#000" fill="none"/>
<path d="M8,15.5 H100.5 V6" stroke="#fff" fill="none"/>
</g>
<g transform="translate(0,60)">
<rect x="8" y="6" width="92" height="9" fill="#fff"/>
<path d="M8.5,15 V6.5 H100" stroke="#808080" fill="none"/><path d="M9.5,14 V7.5 H99" stroke="#000" fill="none"/>
<path d="M8,15.5 H100.5 V6" stroke="#fff" fill="none"/>
</g>
<path d="M93.5,4.5 h6 v11 l-3,3 l-3,-3 z" fill="#c0c0c0" stroke="#000"/><path d="M94.5,15 v-10 h4" stroke="#fff" fill="none"/>
<path d="M79.5,30.5 h6 v11 l-3,3 l-3,-3 z" fill="#c0c0c0" stroke="#000"/><path d="M80.5,41 v-10 h4" stroke="#fff" fill="none"/>
<path d="M8.5,64.5 h6 v11 l-3,3 l-3,-3 z" fill="#d8d8d8" stroke="#000"/>
<path d="M105.5,64.5 h7 v10 h-7" stroke="#fff" fill="none"/>
<path d="M11.5,20v4M16.5,20v3M22.5,20v3M27.5,20v3M32.5,20v3M38.5,20v3M43.5,20v3M48.5,20v3M54.5,20v3M59.5,20v3M65.5,20v3M70.5,20v3M75.5,20v3M81.5,20v3M86.5,20v3M91.5,20v3M96.5,20v4" stroke="#000"/>
<path d="M11.5,46v4M16.5,46v3M22.5,46v3M27.5,46v3M32.5,46v3M38.5,46v3M43.5,46v3M48.5,46v3M54.5,46v3M59.5,46v3M65.5,46v3M70.5,46v3M75.5,46v3M81.5,46v3M86.5,46v3M91.5,46v3M96.5,46v4" stroke="#000"/>
<path d="M11.5,80v4M16.5,80v3M22.5,80v3M27.5,80v3M32.5,80v3M38.5,80v3M43.5,80v3M48.5,80v3M54.5,80v3M59.5,80v3M65.5,80v3M70.5,80v3M75.5,80v3M81.5,80v3M86.5,80v3M91.5,80v3M96.5,80v4" stroke="#000"/>
</svg>
<div class="a" style="left:558px;top:683px;width:16px;height:16px;background:#008080;box-shadow:inset 1px 1px #000,inset -1px -1px #000,inset 2px 2px #c0c0c0,inset -2px -2px #808080,inset 3px 3px #000"></div>
<svg class="a" style="left:558px;top:683px" width="16" height="16"><path d="M5.5,9 v-2 q0,-1.5 2,-2" fill="none" stroke="#fff"/></svg>

<div class="btn" style="left:583px;top:683px;width:66px;height:22px;line-height:21px"></div>
<div class="btn" style="left:583px;top:714px;width:66px;height:22px;line-height:21px"></div>
<div class="btn" style="left:659px;top:683px;width:72px;height:22px;line-height:21px"></div>
<div class="btn" style="left:659px;top:714px;width:72px;height:22px;line-height:21px"></div>
<div class="btn" style="left:659px;top:741px;width:72px;height:20px;line-height:19px"></div>

<!-- taskbar buttons -->
<div class="a" style="left:57px;top:774px;width:160px;height:22px;background:repeating-conic-gradient(#fff 0 25%,#c0c0c0 0 50%) 0 0/2px 2px;box-shadow:inset 1px 1px #000,inset -1px -1px #fff,inset 2px 2px #808080,inset -2px -2px #dfdfdf"></div>
<svg class="a" style="left:62px;top:778px" width="16" height="16">
<rect width="16" height="16" fill="#c8c8c8"/>
<path d="M1,5 l3,-2 v6 l-3,-2z" fill="#e8e800" stroke="#404000" stroke-width="0.6"/><rect x="4" y="1" width="2.5" height="8" fill="#404020"/>
<path d="M8.5,3 v5 h5.5" fill="none" stroke="#c06060" stroke-width="1.4"/><path d="M9,6 l2,-2 l2,2" fill="none" stroke="#c06060"/>
<path d="M2,13 q3,-4 6,0 q3,4 6,-1" fill="none" stroke="#6040c0" stroke-width="1.3"/>
<path d="M2,15 h12" stroke="#e0b070" stroke-width="1"/>
</svg>
<div class="btn" style="left:220px;top:774px;width:160px;height:22px"></div>
<svg class="a" style="left:224px;top:777px" width="18" height="16"><path d="M1.5,4.5 h5 l2,2 h6 v7 h-13z" fill="#e8d870" stroke="#000"/><path d="M1.5,13.5 l3,-5 h11 l-3,5z" fill="#ffff90" stroke="#000"/></svg>
<div class="btn" style="left:383px;top:774px;width:160px;height:22px"></div>
<svg class="a" style="left:387px;top:777px" width="18" height="16"><path d="M2,4 l4,2 l3,-4 l2,4 l4,-1 l-2,4 l3,3 l-4,1 l1,4 l-4,-2 l-3,3 l-1,-4 l-4,0 l2,-3z" fill="#c00000"/></svg>
<div class="a" style="left:1165px;top:778px;width:12px;height:16px;background:#000080;color:#fff;font-size:12px;line-height:16px;overflow:hidden;letter-spacing:-1px;padding-left:1px">DE</div>
<div class="a" style="left:1181px;top:774px;width:97px;height:24px;box-shadow:inset 1px 1px #808080,inset -1px -1px #fff"></div>
<svg class="a" style="left:1183px;top:777px" width="56" height="18">
<circle cx="7.5" cy="7" r="5.5" fill="#a0a0a0" stroke="#707070" stroke-width="1.2"/><circle cx="6.5" cy="6" r="2.5" fill="#d8d8d8"/><circle cx="7.5" cy="7" r="1.5" fill="#606060"/>
<path d="M11,15 q3,-2 4,-5 M9,16 q5,-2 6,-8" fill="none" stroke="#9090e0" stroke-width="1"/>
<path d="M21,3 l3,-2 v2 h4 v4 h-4 v2z" fill="#30c030"/><path d="M23,8 l8,3 l-3,6 l-8,-3z" fill="#707890" stroke="#404040" stroke-width="0.6"/><rect x="24" y="11" width="4" height="2" fill="#d0d0ff"/>
<path d="M37,14 l7,-7 l7,7z" fill="#000"/><path d="M40,9 l4,-3 l4,3" fill="none" stroke="#fff" stroke-width="0.6" stroke-dasharray="1,1"/><ellipse cx="44" cy="12" rx="2" ry="1" fill="#60d040"/><rect x="37" y="15" width="14" height="1.5" fill="#000"/>
</svg>

<!-- dialog -->
<div class="a" style="left:603px;top:77px;width:622px;height:372px;background:#c0c0c0;box-shadow:inset -1px -1px #000,inset 1px 1px #c0c0c0,inset -2px -2px #808080,inset 2px 2px #fff"></div>
<div class="a" style="left:606px;top:80px;width:616px;height:18px;background:linear-gradient(to right,#000080,#1084d0)"></div>
<div class="wb" style="left:1204px;top:82px"></div>
<svg class="a" style="left:1204px;top:82px" width="16" height="14"><path d="M4,3 l7,7 M11,3 l-7,7" stroke="#000" stroke-width="1.6"/></svg>


<!-- dialog content -->
<div class="grp" style="left:631px;top:126px;width:561px;height:72px"></div>
<div class="sunk" style="left:678px;top:140px;width:52px;height:18px;line-height:16px">63,5</div>
<div class="sunk" style="left:799px;top:140px;width:52px;height:18px;line-height:16px">6,2</div>
<div class="sunk" style="left:911px;top:140px;width:52px;height:18px;line-height:16px">42,49</div>
<div class="sunk" style="left:1007px;top:140px;width:52px;height:18px;line-height:16px">16,5</div>
<div class="sunk" style="left:1108px;top:140px;width:52px;height:18px;line-height:16px">213,8</div>

<div class="sunk" style="left:678px;top:172px;width:52px;height:18px;line-height:16px">0,39</div>
<div class="sunk" style="left:799px;top:172px;width:52px;height:18px;line-height:16px">3,97</div>
<div class="sunk" style="left:910px;top:172px;width:52px;height:18px;line-height:16px">0,43</div>
<div class="sunk" style="left:1007px;top:168px;width:153px;height:21px;text-align:left"></div>
<div class="btn" style="left:1161px;top:168px;width:16px;height:11px"></div>
<div class="btn" style="left:1161px;top:179px;width:16px;height:10px"></div>
<svg class="a" style="left:1161px;top:168px" width="16" height="21"><path d="M7,5 h2 v1 h-2z M6,6h4v1h-4z" fill="#000"/><path d="M6,14 h4 v1 h-4z M7,15 h2 v1 h-2z" fill="#000"/></svg>

<div class="grp" style="left:631px;top:231px;width:561px;height:72px"></div>
<div class="sunk" style="left:677px;top:243px;width:52px;height:18px;line-height:16px">0,0</div>
<div class="sunk" style="left:799px;top:243px;width:52px;height:18px;line-height:16px">0,00</div>
<div class="sunk" style="left:910px;top:243px;width:52px;height:18px;line-height:16px">0,00</div>
<div class="sunk" style="left:1027px;top:243px;width:52px;height:18px;line-height:16px">0,0</div>

<div class="sunk" style="left:677px;top:275px;width:52px;height:18px;line-height:16px">0,0</div>
<div class="sunk" style="left:799px;top:275px;width:52px;height:18px;line-height:16px">0,00</div>

<div class="grp" style="left:631px;top:328px;width:561px;height:47px"></div>
<div class="a" style="left:637px;top:325px;width:110px;height:8px;background:#c0c0c0"></div>
<div class="edit" style="left:671px;top:343px;width:57px;height:21px;line-height:19px;padding-left:3px"></div>
<div class="edit" style="left:797px;top:343px;width:54px;height:21px;line-height:19px;padding-left:3px"></div>
<div class="edit" style="left:912px;top:343px;width:51px;height:21px;line-height:19px;padding-left:3px"></div>
<div class="a" style="left:1047px;top:340px;width:129px;height:25px;border:1px solid #000"></div>
<div class="btn" style="left:1048px;top:341px;width:127px;height:23px;line-height:21px"></div>
<div class="a" style="left:1052px;top:345px;width:119px;height:15px;border:1px dotted #000"></div>

<div class="btn" style="left:669px;top:403px;width:83px;height:25px;line-height:24px"></div>
<div class="btn" style="left:775px;top:403px;width:83px;height:25px;line-height:24px"></div>
<div class="btn" style="left:882px;top:403px;width:84px;height:25px;line-height:24px"></div>

<div class="a" style="left:55.59px;top:-6.00px;font-family:'Liberation Sans';font-size:13px;font-weight:bold;color:#c0c0c0;line-height:30px;transform:scaleX(0.9065);transform-origin:0 0;">HobbyBox ® MLS</div>
<div class="a" style="left:163.00px;top:-6.00px;font-family:'Liberation Sans';font-size:13px;font-weight:bold;color:#c0c0c0;line-height:30px;transform:scaleX(1.0345);transform-origin:0 0;">V.5.0</div>
<div class="a" style="left:205.70px;top:-6.00px;font-family:'Liberation Sans';font-size:13px;font-weight:bold;color:#c0c0c0;line-height:30px;">für Windows 95/98/ME/NT/2000/XP</div>
<div class="a" style="left:439.71px;top:-6.00px;font-family:'Liberation Sans';font-size:13px;font-weight:bold;color:#c0c0c0;line-height:30px;transform:scaleX(0.9857);transform-origin:0 0;">(c)</div>
<div class="a" style="left:463.00px;top:-6.00px;font-family:'Liberation Sans';font-size:13px;font-weight:bold;color:#c0c0c0;line-height:30px;transform:scaleX(0.9295);transform-origin:0 0;">A. &amp; G. Matz - [Impedanz]</div>
<div class="a" style="left:37.85px;top:13.00px;font-family:'Liberation Sans';font-size:13px;font-weight:normal;color:#808080;line-height:30px;transform:scaleX(0.8483);transform-origin:0 0;">Datei</div>
<div class="a" style="left:74.98px;top:13.00px;font-family:'Liberation Sans';font-size:13px;font-weight:normal;color:#808080;line-height:30px;transform:scaleX(0.8230);transform-origin:0 0;">Bearbeiten</div>
<div class="a" style="left:137.93px;top:13.00px;font-family:'Liberation Sans';font-size:13px;font-weight:normal;color:#808080;line-height:30px;transform:scaleX(0.8239);transform-origin:0 0;">Messen</div>
<div class="a" style="left:187.00px;top:13.00px;font-family:'Liberation Sans';font-size:13px;font-weight:normal;color:#808080;line-height:30px;transform:scaleX(0.8148);transform-origin:0 0;">Anzeigen</div>
<div class="a" style="left:242.93px;top:13.00px;font-family:'Liberation Sans';font-size:13px;font-weight:normal;color:#808080;line-height:30px;transform:scaleX(0.8191);transform-origin:0 0;">Einstellungen</div>
<div class="a" style="left:318.00px;top:13.00px;font-family:'Liberation Sans';font-size:13px;font-weight:normal;color:#808080;line-height:30px;transform:scaleX(0.8667);transform-origin:0 0;">Tools</div>
<div class="a" style="left:355.19px;top:13.00px;font-family:'Liberation Sans';font-size:13px;font-weight:normal;color:#808080;line-height:30px;transform:scaleX(0.8140);transform-origin:0 0;">Fenster</div>
<div class="a" style="left:402.16px;top:13.00px;font-family:'Liberation Sans';font-size:13px;font-weight:normal;color:#808080;line-height:30px;transform:scaleX(0.8400);transform-origin:0 0;">Hilfe</div>
<div class="a" style="left:13.90px;top:83.00px;font-family:'Liberation Sans';font-size:11px;font-weight:normal;color:#000;line-height:30px;transform:scaleX(0.9261);transform-origin:0 0;">Ohm</div>
<div class="a" style="left:66.81px;top:85.00px;font-family:'Liberation Sans';font-size:12px;font-weight:normal;color:#0000c0;line-height:30px;transform:scaleX(0.8893);transform-origin:0 0;">Impedanz - Frequenzgang , C1 mit Comp Magnet TSP erste Messung 4 Tage später.imp, kalibriert</div>
<div class="a" style="left:1244.00px;top:83.00px;font-family:'Liberation Sans';font-size:11px;font-weight:normal;color:#000;line-height:30px;transform:scaleX(0.9583);transform-origin:0 0;">Grad</div>
<div class="a" style="left:1253.78px;top:624.00px;font-family:'Liberation Sans';font-size:11px;font-weight:normal;color:#000;line-height:30px;transform:scaleX(1.0167);transform-origin:0 0;">Hz</div>
<div class="a" style="left:1186.80px;top:607.00px;font-family:'Liberation Serif';font-size:11px;font-weight:normal;color:#000;line-height:30px;transform:scaleX(0.8750);transform-origin:0 0;">(c)HobbyBox</div>
<div class="a" style="left:37.54px;top:645.00px;font-family:'Liberation Sans';font-size:13px;font-weight:bold;color:#000;line-height:30px;transform:scaleX(0.9571);transform-origin:0 0;">Frequ : 6,00 kHz</div>
<div class="a" style="left:181.85px;top:645.00px;font-family:'Liberation Sans';font-size:13px;font-weight:bold;color:#000;line-height:30px;transform:scaleX(0.9543);transform-origin:0 0;">Li. : 156,33 mVeff</div>
<div class="a" style="left:319.63px;top:645.00px;font-family:'Liberation Sans';font-size:13px;font-weight:bold;color:#000080;line-height:30px;transform:scaleX(0.9700);transform-origin:0 0;">Re. : 660,35 mVeff</div>
<div class="a" style="left:469.62px;top:645.00px;font-family:'Liberation Sans';font-size:13px;font-weight:bold;color:#e00000;line-height:30px;transform:scaleX(0.9846);transform-origin:0 0;">Re. : 66,80 %</div>
<div class="a" style="left:174.60px;top:671.40px;font-family:'Liberation Sans';font-size:12px;font-weight:normal;color:#000;line-height:30px;transform:scaleX(0.8243);transform-origin:0 0;">----- Skalierung ------</div>
<div class="a" style="left:285.60px;top:671.40px;font-family:'Liberation Sans';font-size:12px;font-weight:normal;color:#000;line-height:30px;transform:scaleX(0.8625);transform-origin:0 0;">-- Frequenzbereich --</div>
<div class="a" style="left:288.00px;top:691.00px;font-family:'Liberation Sans';font-size:12px;font-weight:normal;color:#000;line-height:30px;transform:scaleX(0.9158);transform-origin:0 0;">von</div>
<div class="a" style="left:289.84px;top:716.00px;font-family:'Liberation Sans';font-size:12px;font-weight:normal;color:#000;line-height:30px;transform:scaleX(0.9107);transform-origin:0 0;">bis</div>
<div class="a" style="left:310.63px;top:690.00px;font-family:'Liberation Sans';font-size:12px;font-weight:normal;color:#40ff40;line-height:30px;transform:scaleX(0.9667);transform-origin:0 0;">20</div>
<div class="a" style="left:310.65px;top:714.20px;font-family:'Liberation Sans';font-size:12px;font-weight:normal;color:#40ff40;line-height:30px;transform:scaleX(0.9520);transform-origin:0 0;">6000</div>
<div class="a" style="left:365.27px;top:693.00px;font-family:'Liberation Sans';font-size:12px;font-weight:normal;color:#000;line-height:30px;transform:scaleX(0.9808);transform-origin:0 0;">Hz</div>
<div class="a" style="left:365.27px;top:716.40px;font-family:'Liberation Sans';font-size:12px;font-weight:normal;color:#000;line-height:30px;transform:scaleX(0.9808);transform-origin:0 0;">Hz</div>
<div class="a" style="left:326.59px;top:737.00px;font-family:'Liberation Sans';font-size:12px;font-weight:normal;color:#000;line-height:30px;transform:scaleX(0.9139);transform-origin:0 0;">Hz fein</div>
<div class="a" style="left:116.00px;top:693.20px;font-family:'Liberation Sans';font-size:12px;font-weight:normal;color:#000;line-height:30px;transform:scaleX(0.8783);transform-origin:0 0;">TSP</div>
<div class="a" style="left:41.60px;top:722.60px;font-family:'Liberation Sans';font-size:12px;font-weight:normal;color:#000;line-height:30px;transform:scaleX(0.8765);transform-origin:0 0;">schließen</div>
<div class="a" style="left:108.50px;top:722.60px;font-family:'Liberation Sans';font-size:12px;font-weight:normal;color:#000;line-height:30px;transform:scaleX(0.9000);transform-origin:0 0;">Phase</div>
<div class="a" style="left:184.00px;top:732.40px;font-family:'Liberation Sans';font-size:12px;font-weight:normal;color:#000;line-height:30px;transform:scaleX(0.8949);transform-origin:0 0;">Autoskalierung</div>
<div class="a" style="left:412.52px;top:674.40px;font-family:'Liberation Sans';font-size:12px;font-weight:normal;color:#000;line-height:30px;transform:scaleX(0.8842);transform-origin:0 0;">SIG</div>
<div class="a" style="left:412.60px;top:699.30px;font-family:'Liberation Sans';font-size:12px;font-weight:normal;color:#000;line-height:30px;transform:scaleX(0.8460);transform-origin:0 0;">OUT</div>
<div class="a" style="left:412.47px;top:721.00px;font-family:'Liberation Sans';font-size:12px;font-weight:normal;color:#000;line-height:30px;transform:scaleX(0.9333);transform-origin:0 0;">Line</div>
<div class="a" style="left:447.60px;top:721.00px;font-family:'Liberation Sans';font-size:12px;font-weight:normal;color:#000;line-height:30px;transform:scaleX(0.9048);transform-origin:0 0;">unkalib. unkalib.</div>
<div class="a" style="left:411.98px;top:735.80px;font-family:'Liberation Sans';font-size:12px;font-weight:normal;color:#000;line-height:30px;transform:scaleX(1.0200);transform-origin:0 0;">IN</div>
<div class="a" style="left:588.98px;top:680.00px;font-family:'Liberation Sans';font-size:13px;font-weight:normal;color:#000;line-height:30px;transform:scaleX(0.8212);transform-origin:0 0;">1. Messung</div>
<div class="a" style="left:586.67px;top:711.60px;font-family:'Liberation Sans';font-size:13px;font-weight:normal;color:#000;line-height:30px;transform:scaleX(0.8258);transform-origin:0 0;">2. Messung</div>
<div class="a" style="left:662.88px;top:680.00px;font-family:'Liberation Sans';font-size:13px;font-weight:normal;color:#000;line-height:30px;transform:scaleX(0.8197);transform-origin:0 0;">Einstellungen</div>
<div class="a" style="left:667.97px;top:711.60px;font-family:'Liberation Sans';font-size:13px;font-weight:normal;color:#000;line-height:30px;transform:scaleX(0.8313);transform-origin:0 0;">Meßaufbau</div>
<div class="a" style="left:684.78px;top:738.00px;font-family:'Liberation Sans';font-size:13px;font-weight:normal;color:#000;line-height:30px;transform:scaleX(0.8160);transform-origin:0 0;">Hilfe</div>
<div class="a" style="left:22.10px;top:770.00px;font-family:'Liberation Sans';font-size:13px;font-weight:bold;color:#000;line-height:30px;transform:scaleX(0.8966);transform-origin:0 0;">Start</div>
<div class="a" style="left:81.55px;top:771.00px;font-family:'Liberation Sans';font-size:13px;font-weight:bold;color:#000;line-height:30px;transform:scaleX(0.9479);transform-origin:0 0;">HobbyBox V.5.0</div>
<div class="a" style="left:243.60px;top:771.00px;font-family:'Liberation Sans';font-size:12px;font-weight:normal;color:#000;line-height:30px;transform:scaleX(0.8851);transform-origin:0 0;">Visaton BG20</div>
<div class="a" style="left:406.61px;top:771.00px;font-family:'Liberation Sans';font-size:12px;font-weight:normal;color:#000;line-height:30px;transform:scaleX(0.8862);transform-origin:0 0;">C1 TSP erste Messung 4 ...</div>
<div class="a" style="left:1243.60px;top:770.60px;font-family:'Liberation Sans';font-size:12px;font-weight:normal;color:#000;line-height:30px;transform:scaleX(0.9000);transform-origin:0 0;">09:52</div>
<div class="a" style="left:609.10px;top:74.00px;font-family:'Liberation Sans';font-size:12px;font-weight:bold;color:#fff;line-height:30px;transform:scaleX(0.9727);transform-origin:0 0;">Thiele Small Parameter</div>
<div class="a" style="left:631.25px;top:102.50px;font-family:'Liberation Sans';font-size:13px;font-weight:bold;color:#000080;line-height:30px;transform:scaleX(1.1023);transform-origin:0 0;">Werte durch 1. Messung</div>
<div class="a" style="left:631.00px;top:206.25px;font-family:'Liberation Sans';font-size:13px;font-weight:bold;color:#000080;line-height:30px;transform:scaleX(1.0959);transform-origin:0 0;">Werte durch 2. Messung mit Zusatzmasse</div>
<div class="a" style="left:638.36px;top:315.50px;font-family:'Liberation Sans';font-size:12px;font-weight:normal;color:#000;line-height:30px;transform:scaleX(0.8887);transform-origin:0 0;">Korrektur - Möglichkeit</div>
<div class="a" style="left:646.89px;top:338.10px;font-family:'Liberation Sans';font-size:14px;font-weight:bold;color:#000;line-height:30px;transform:scaleX(1.1125);transform-origin:0 0;">Re</div>
<div class="a" style="left:782.17px;top:338.10px;font-family:'Liberation Sans';font-size:14px;font-weight:bold;color:#000;line-height:30px;transform:scaleX(1.0833);transform-origin:0 0;">D</div>
<div class="a" style="left:885.19px;top:338.10px;font-family:'Liberation Sans';font-size:14px;font-weight:bold;color:#000;line-height:30px;transform:scaleX(1.0605);transform-origin:0 0;">Ma</div>
<div class="a" style="left:1065.00px;top:337.70px;font-family:'Liberation Sans';font-size:12px;font-weight:normal;color:#000;line-height:30px;transform:scaleX(0.8962);transform-origin:0 0;">TSP neu berechnen</div>
<div class="a" style="left:686.60px;top:401.25px;font-family:'Liberation Sans';font-size:12px;font-weight:normal;color:#000;line-height:30px;transform:scaleX(0.8990);transform-origin:0 0;">Schließen</div>
<div class="a" style="left:795.81px;top:401.25px;font-family:'Liberation Sans';font-size:12px;font-weight:normal;color:#000;line-height:30px;transform:scaleX(0.9360);transform-origin:0 0;">Drucken</div>
<div class="a" style="left:641.00px;top:133.00px;font-family:'Liberation Sans';font-size:13px;font-weight:bold;color:#000;line-height:30px;transform:scaleX(0.8824);transform-origin:0 0;">Zmax</div>
<div class="a" style="left:732.50px;top:133.10px;font-family:'Liberation Sans';font-size:12px;font-weight:normal;color:#000;line-height:30px;transform:scaleX(0.8760);transform-origin:0 0;">Ohm</div>
<div class="a" style="left:771.46px;top:133.00px;font-family:'Liberation Sans';font-size:13px;font-weight:bold;color:#000;line-height:30px;transform:scaleX(1.0400);transform-origin:0 0;">Re</div>
<div class="a" style="left:853.50px;top:133.00px;font-family:'Liberation Sans';font-size:12px;font-weight:normal;color:#000;line-height:30px;transform:scaleX(0.8600);transform-origin:0 0;">Ohm</div>
<div class="a" style="left:888.48px;top:133.00px;font-family:'Liberation Sans';font-size:13px;font-weight:bold;color:#000;line-height:30px;transform:scaleX(0.9179);transform-origin:0 0;">Fs</div>
<div class="a" style="left:964.21px;top:133.30px;font-family:'Liberation Sans';font-size:12px;font-weight:normal;color:#000;line-height:30px;">Hz</div>
<div class="a" style="left:994.95px;top:133.00px;font-family:'Liberation Sans';font-size:13px;font-weight:bold;color:#000;line-height:30px;transform:scaleX(1.0500);transform-origin:0 0;">D</div>
<div class="a" style="left:1061.70px;top:133.50px;font-family:'Liberation Sans';font-size:12px;font-weight:normal;color:#000;line-height:30px;transform:scaleX(0.9067);transform-origin:0 0;">cm</div>
<div class="a" style="left:1088.50px;top:133.00px;font-family:'Liberation Sans';font-size:13px;font-weight:bold;color:#000;line-height:30px;">Sd</div>
<div class="a" style="left:1162.50px;top:132.60px;font-family:'Liberation Sans';font-size:12px;font-weight:normal;color:#000;line-height:30px;transform:scaleX(0.8400);transform-origin:0 0;">cm²</div>
<div class="a" style="left:641.00px;top:165.60px;font-family:'Liberation Sans';font-size:13px;font-weight:bold;color:#000;line-height:30px;transform:scaleX(0.9167);transform-origin:0 0;">Qts</div>
<div class="a" style="left:771.90px;top:165.60px;font-family:'Liberation Sans';font-size:13px;font-weight:bold;color:#000;line-height:30px;transform:scaleX(0.7966);transform-origin:0 0;">Qms</div>
<div class="a" style="left:887.75px;top:165.60px;font-family:'Liberation Sans';font-size:13px;font-weight:bold;color:#000;line-height:30px;transform:scaleX(0.8854);transform-origin:0 0;">Qes</div>
<div class="a" style="left:987.99px;top:165.00px;font-family:'Liberation Sans';font-size:13px;font-weight:bold;color:#000;line-height:30px;">Le</div>
<div class="a" style="left:1021.00px;top:165.00px;font-family:'Liberation Sans';font-size:12px;font-weight:normal;color:#000;line-height:30px;transform:scaleX(0.9391);transform-origin:0 0;">0,25</div>
<div class="a" style="left:1060.29px;top:165.00px;font-family:'Liberation Sans';font-size:12px;font-weight:normal;color:#000;line-height:30px;transform:scaleX(0.9059);transform-origin:0 0;">mH</div>
<div class="a" style="left:1105.29px;top:165.00px;font-family:'Liberation Sans';font-size:13px;font-weight:bold;color:#000;line-height:30px;transform:scaleX(1.0143);transform-origin:0 0;">1023</div>
<div class="a" style="left:1142.17px;top:165.00px;font-family:'Liberation Sans';font-size:12px;font-weight:normal;color:#000;line-height:30px;transform:scaleX(1.0308);transform-origin:0 0;">Hz</div>
<div class="a" style="left:640.25px;top:236.25px;font-family:'Liberation Sans';font-size:13px;font-weight:bold;color:#000;line-height:30px;transform:scaleX(0.9545);transform-origin:0 0;">Vas</div>
<div class="a" style="left:731.07px;top:236.25px;font-family:'Liberation Sans';font-size:12px;font-weight:normal;color:#000;line-height:30px;transform:scaleX(0.8333);transform-origin:0 0;">L</div>
<div class="a" style="left:771.04px;top:236.25px;font-family:'Liberation Sans';font-size:13px;font-weight:bold;color:#000;line-height:30px;transform:scaleX(0.8571);transform-origin:0 0;">Mms</div>
<div class="a" style="left:852.50px;top:236.75px;font-family:'Liberation Sans';font-size:12px;font-weight:normal;color:#000;line-height:30px;transform:scaleX(0.9333);transform-origin:0 0;">g</div>
<div class="a" style="left:886.25px;top:236.25px;font-family:'Liberation Sans';font-size:13px;font-weight:bold;color:#000;line-height:30px;transform:scaleX(0.8304);transform-origin:0 0;">Cms</div>
<div class="a" style="left:963.57px;top:236.50px;font-family:'Liberation Sans';font-size:12px;font-weight:normal;color:#000;line-height:30px;transform:scaleX(0.9267);transform-origin:0 0;">mm/N</div>
<div class="a" style="left:1008.68px;top:236.25px;font-family:'Liberation Sans';font-size:13px;font-weight:bold;color:#000;line-height:30px;transform:scaleX(0.9187);transform-origin:0 0;">BL</div>
<div class="a" style="left:1081.80px;top:236.50px;font-family:'Liberation Sans';font-size:12px;font-weight:normal;color:#000;line-height:30px;transform:scaleX(0.8647);transform-origin:0 0;">Tm</div>
<div class="a" style="left:639.56px;top:268.00px;font-family:'Liberation Sans';font-size:13px;font-weight:bold;color:#000;line-height:30px;transform:scaleX(0.9375);transform-origin:0 0;">SPL</div>
<div class="a" style="left:731.00px;top:269.75px;font-family:'Liberation Sans';font-size:12px;font-weight:normal;color:#000;line-height:30px;transform:scaleX(0.8036);transform-origin:0 0;">dB</div>
<div class="a" style="left:781.03px;top:268.60px;font-family:'Liberation Sans';font-size:13px;font-weight:bold;color:#000;line-height:30px;transform:scaleX(0.8733);transform-origin:0 0;">no</div>
<div class="a" style="left:854.00px;top:268.75px;font-family:'Liberation Sans';font-size:12px;font-weight:normal;color:#000;line-height:30px;transform:scaleX(0.7000);transform-origin:0 0;">%</div>
<div class="a" style="left:731.80px;top:339.00px;font-family:'Liberation Sans';font-size:12px;font-weight:normal;color:#000;line-height:30px;transform:scaleX(0.8480);transform-origin:0 0;">Ohm</div>
<div class="a" style="left:854.50px;top:339.50px;font-family:'Liberation Sans';font-size:12px;font-weight:normal;color:#000;line-height:30px;transform:scaleX(0.9333);transform-origin:0 0;">cm</div>
<div class="a" style="left:966.50px;top:339.50px;font-family:'Liberation Sans';font-size:12px;font-weight:normal;color:#000;line-height:30px;transform:scaleX(0.7727);transform-origin:0 0;">gr</div>
<div class="a" style="left:673.52px;top:339.00px;font-family:'Liberation Sans';font-size:12px;font-weight:normal;color:#000;line-height:30px;transform:scaleX(0.9800);transform-origin:0 0;">6,2</div>
<div class="a" style="left:799.05px;top:339.00px;font-family:'Liberation Sans';font-size:12px;font-weight:normal;color:#000;line-height:30px;transform:scaleX(0.9545);transform-origin:0 0;">16,5</div>
<div class="a" style="left:914.60px;top:339.00px;font-family:'Liberation Sans';font-size:12px;font-weight:normal;color:#000;line-height:30px;transform:scaleX(0.8966);transform-origin:0 0;">15,00</div>
<div class="a" style="left:914.20px;top:400.30px;font-family:'Liberation Sans';font-size:12px;font-weight:normal;color:#000;line-height:30px;transform:scaleX(0.8792);transform-origin:0 0;"><u>H</u>ilfe</div>
</body></html>
